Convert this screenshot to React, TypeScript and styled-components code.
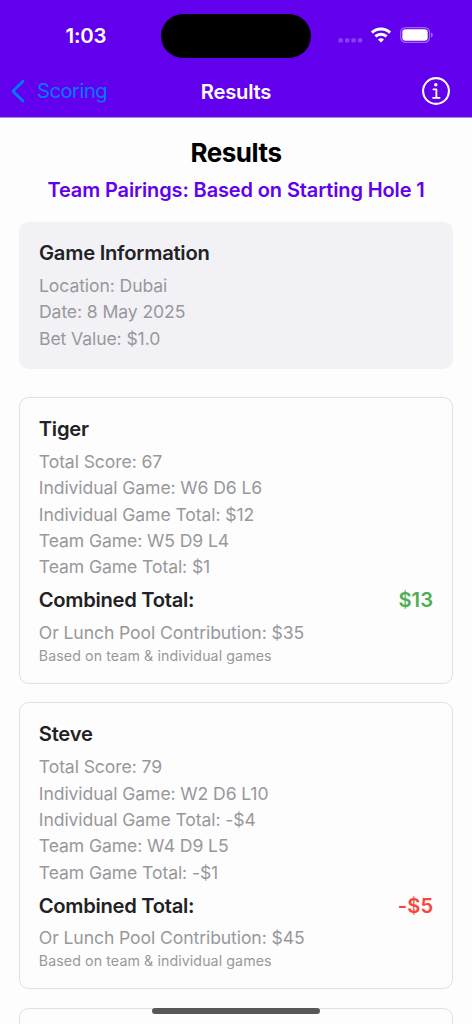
import React from "react";
import styled, { createGlobalStyle } from "styled-components";

const GlobalStyle = createGlobalStyle`
  * { box-sizing: border-box; }
  html, body { margin: 0; height: 100%; overflow: hidden; background: #fdfdfd; }
  body { font-family: Inter, "Liberation Sans", sans-serif; }
`;

const Screen = styled.div`
  position: relative;
  display: flex;
  flex-direction: column;
  width: 472px;
  height: 1024px;
  overflow: hidden;
  background: #fdfdfd;
`;

const Header = styled.header`
  flex: none;
  height: 118px;
  background: #6200ee;
  border-bottom: 1px solid #a98ad8;
  color: #fff;
`;

const StatusBar = styled.div`
  display: grid;
  grid-template-columns: 161px 150px 161px;
  height: 64px;
  padding-top: 14px;
`;

const Clock = styled.div`
  padding-left: 65.5px;
  font-size: 20.4px;
  font-weight: 600;
  line-height: 43px;
  letter-spacing: -0.2px;
`;

const Island = styled.div`
  height: 44px;
  border-radius: 22px;
  background: #000;
`;

const StatusIcons = styled.svg`
  display: block;
  width: 161px;
  height: 44px;
`;

const NavBar = styled.nav`
  display: grid;
  grid-template-columns: 150px 1fr 150px;
  align-items: center;
  height: 54px;
`;

const BackButton = styled.button`
  display: flex;
  align-items: center;
  gap: 12px;
  padding: 0 0 0 11px;
  border: 0;
  background: none;
  color: #007aff;
  font: 400 20.2px/28px Inter, sans-serif;
  letter-spacing: -0.5px;
`;

const NavTitle = styled.div`
  text-align: center;
  font-size: 20.2px;
  font-weight: 600;
  letter-spacing: -0.2px;
`;

const InfoButton = styled.button`
  justify-self: end;
  display: flex;
  margin-right: 21px;
  padding: 0;
  border: 0;
  background: none;
`;

const Content = styled.main`
  display: flex;
  flex-direction: column;
  flex: 1;
  min-height: 0;
  padding: 19px 19px 0;
  overflow: hidden;
`;

const PageTitle = styled.h1`
  margin: 0;
  text-align: center;
  font-size: 26px;
  font-weight: 700;
  line-height: 32px;
  letter-spacing: -0.45px;
  color: #000;
`;

const Subtitle = styled.h2`
  margin: 6px 0 17px;
  text-align: center;
  font-size: 20px;
  font-weight: 600;
  line-height: 31px;
  height: 30px;
  letter-spacing: -0.13px;
  color: #6200ee;
`;

const Card = styled.section<{ $filled?: boolean }>`
  flex: none;
  padding: ${(p) => (p.$filled ? "19.2px 20px" : "19px 18.8px 0")};
  height: ${(p) => (p.$filled ? "147px" : "287px")};
  margin-bottom: ${(p) => (p.$filled ? "28px" : "18.3px")};
  border: ${(p) => (p.$filled ? "0" : "1.2px solid #e0dfe7")};
  border-radius: 9.6px;
  background: ${(p) => (p.$filled ? "#f2f1f6" : "#fdfdfd")};
`;

const Heading = styled.h3`
  margin: 0 0 9.6px;
  font-size: 20.2px;
  font-weight: 600;
  line-height: 24.3px;
  letter-spacing: -0.25px;
  color: #222224;
`;

const Lines = styled.div`
  display: flex;
  flex-direction: column;
  gap: 4.8px;
`;

const Line = styled.div`
  font-size: 17.6px;
  line-height: 21.6px;
  letter-spacing: -0.1px;
  color: #98989c;
  white-space: nowrap;
`;

const TotalRow = styled.div`
  display: flex;
  justify-content: space-between;
  margin: 10.2px 0 9.6px;
  font-size: 20.2px;
  font-weight: 600;
  line-height: 24.3px;
  letter-spacing: -0.3px;
  color: #222224;
`;

const Amount = styled.span<{ $negative: boolean }>`
  letter-spacing: 0.1px;
  color: ${(p) => (p.$negative ? "#f9463a" : "#4caf50")};
`;

const Note = styled.div`
  margin-top: -1px;
  font-size: 14.2px;
  line-height: 16.8px;
  letter-spacing: 0.1px;
  color: #98989c;
`;

const HomeIndicator = styled.div`
  position: absolute;
  left: 152px;
  bottom: 10px;
  width: 168px;
  height: 6px;
  border-radius: 3px;
  background: #58585a;
`;

interface Player {
  name: string;
  lines: string[];
  total: string;
  lunch: string;
}

const players: Player[] = [
  {
    name: "Tiger",
    lines: [
      "Total Score: 67",
      "Individual Game: W6 D6 L6",
      "Individual Game Total: $12",
      "Team Game: W5 D9 L4",
      "Team Game Total: $1",
    ],
    total: "$13",
    lunch: "$35",
  },
  {
    name: "Steve",
    lines: [
      "Total Score: 79",
      "Individual Game: W2 D6 L10",
      "Individual Game Total: -$4",
      "Team Game: W4 D9 L5",
      "Team Game Total: -$1",
    ],
    total: "-$5",
    lunch: "$45",
  },
];

const PlayerCard = ({ player }: { player: Player }) => (
  <Card>
    <Heading>{player.name}</Heading>
    <Lines>
      {player.lines.map((line) => (
        <Line key={line}>{line}</Line>
      ))}
    </Lines>
    <TotalRow>
      <span>Combined Total:</span>
      <Amount $negative={player.total.startsWith("-")}>{player.total}</Amount>
    </TotalRow>
    <Lines>
      <Line>Or Lunch Pool Contribution: {player.lunch}</Line>
      <Note>Based on team &amp; individual games</Note>
    </Lines>
  </Card>
);

export default function App() {
  return (
    <Screen>
      <GlobalStyle />
      <Header>
        <StatusBar>
          <Clock>1:03</Clock>
          <Island />
          <StatusIcons viewBox="0 0 161 44">
            <g fill="#fff" fillOpacity="0.25">
              <rect x="27.5" y="24.2" width="4.4" height="4.4" rx="1.4" />
              <rect x="34" y="24.2" width="4.4" height="4.4" rx="1.4" />
              <rect x="40.4" y="24.2" width="4.4" height="4.4" rx="1.4" />
              <rect x="46.8" y="24.2" width="4.4" height="4.4" rx="1.4" />
            </g>
            <g fill="none" stroke="#fff" strokeWidth="2.9">
              <path d="M60.9 18.6a13.2 13.2 0 0 1 18.2 0" />
              <path d="M64.4 22.4a8.2 8.2 0 0 1 11.2 0" />
            </g>
            <path d="M67 25.6a4.6 4.6 0 0 1 6 0l-3 3z" fill="#fff" />
            <rect x="89.7" y="13.6" width="28.8" height="14.8" rx="4.8" fill="none" stroke="#fff" strokeOpacity="0.4" strokeWidth="1.2" />
            <rect x="91.3" y="15.3" width="25.4" height="11.4" rx="3.3" fill="#fff" />
            <path d="M120 18.5v5q1.8-.8 1.8-2.5t-1.8-2.5z" fill="#fff" fillOpacity="0.45" />
          </StatusIcons>
        </StatusBar>
        <NavBar>
          <BackButton>
            <svg width="14" height="24" viewBox="0 0 14 24">
              <path d="M12 2.3 1.9 12.2 12 22" fill="none" stroke="#007aff" strokeWidth="2.7" strokeLinecap="round" strokeLinejoin="round" />
            </svg>
            Scoring
          </BackButton>
          <NavTitle>Results</NavTitle>
          <InfoButton aria-label="Information">
            <svg width="30" height="30" viewBox="0 0 30 30">
              <circle cx="15" cy="15" r="12.9" fill="none" stroke="#fff" strokeWidth="2.1" />
              <circle cx="14.8" cy="8.7" r="1.75" fill="#fff" />
              <path d="M12.4 13.3h3v8.3M12 21.8h6.6" fill="none" stroke="#fff" strokeWidth="1.8" strokeLinecap="round" strokeLinejoin="round" />
            </svg>
          </InfoButton>
        </NavBar>
      </Header>
      <Content>
        <PageTitle>Results</PageTitle>
        <Subtitle>Team Pairings: Based on Starting Hole 1</Subtitle>
        <Card $filled>
          <Heading>Game Information</Heading>
          <Lines>
            <Line>Location: Dubai</Line>
            <Line>Date: 8 May 2025</Line>
            <Line>Bet Value: $1.0</Line>
          </Lines>
        </Card>
        {players.map((player) => (
          <PlayerCard key={player.name} player={player} />
        ))}
        <Card />
      </Content>
      <HomeIndicator />
    </Screen>
  );
}
